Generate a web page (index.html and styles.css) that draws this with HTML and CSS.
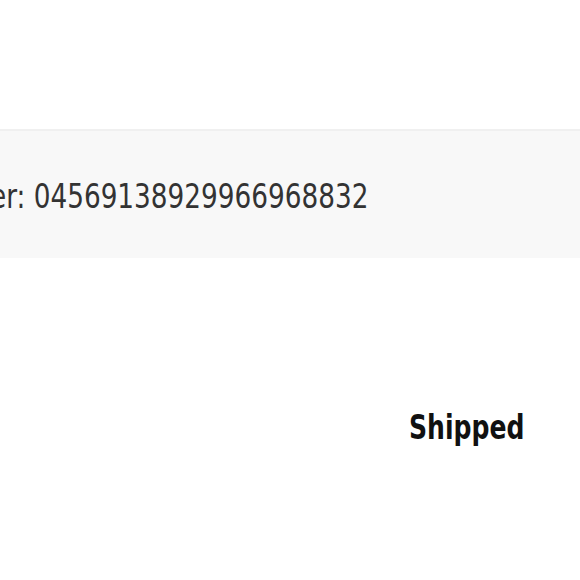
FILE: index.html
```html
<!DOCTYPE html>
<html>
<head>
<meta charset="utf-8">
<link rel="stylesheet" href="styles.css">
</head>
<body>
<div class="page">
  <div class="top"></div>
  <div class="band">
    <span class="number">er: 04569138929966968832</span>
  </div>
  <div class="status-row">
    <span class="status">Shipped</span>
  </div>
</div>
</body>
</html>
```
FILE: styles.css
```css
html, body {
  margin: 0;
  padding: 0;
  background: #fff;
  overflow: hidden;
}
.page {
  width: 580px;
  height: 580px;
  font-family: "DejaVu Sans Condensed", "DejaVu Sans", sans-serif;
}
.top {
  height: 129px;
}
.band {
  height: 129px;
  box-sizing: border-box;
  border-top: 2px solid #f0f0f0;
  background: #f8f8f8;
  display: flex;
  align-items: center;
}
.number {
  display: inline-block;
  margin-left: -10px;
  font-size: 34px;
  color: #333;
  white-space: nowrap;
  line-height: 1;
  padding-top: 3px;
  transform: scaleX(0.86);
  transform-origin: left center;
}
.status-row {
  padding-top: 152px;
  padding-left: 409px;
}
.status {
  display: inline-block;
  font-size: 34px;
  font-weight: bold;
  color: #111;
  line-height: 1;
  transform: scaleX(0.82);
  transform-origin: left center;
}
```
